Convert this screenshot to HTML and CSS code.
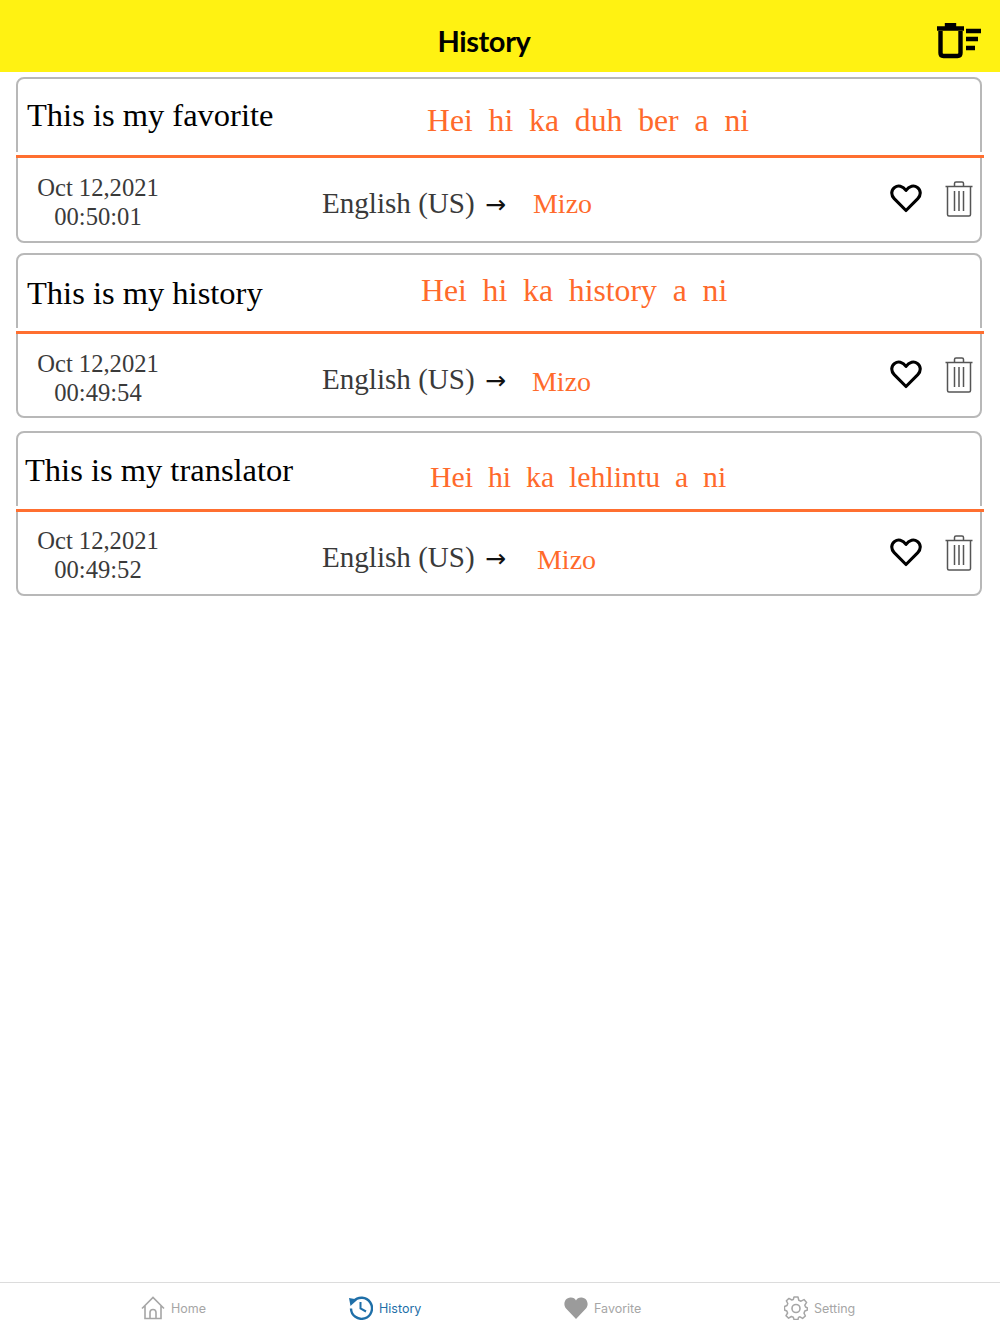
FILE: index.html
```html
<!DOCTYPE html>
<html lang="en">
<head>
<meta charset="utf-8">
<title>History</title>
<link rel="stylesheet" href="styles.css">
</head>
<body>
<svg class="defs" width="0" height="0" aria-hidden="true">
  <symbol id="heart" viewBox="0 0 32 30"><path d="M16 27.500 4.200 15.600C.6 12 1.200 6.800 4.600 4.400 8 2 12.800 2.800 16 7.400 19.200 2.800 24 2 27.400 4.400 30.800 6.800 31.400 12 27.800 15.600Z" fill="none" stroke="#000" stroke-width="3.100" stroke-linejoin="round"/></symbol>
  <symbol id="trash" viewBox="0 0 28 36"><path d="M.5 5.500H27.500M2.500 5.500V33.500Q2.500 35 4 35H24Q25.500 35 25.500 33.500V5.500M9.500 5.500V2.500Q9.500 1 11 1H17Q18.500 1 18.500 2.500V5.500M9.500 10V30M14 10V30M18.500 10V30" fill="none" stroke="#555" stroke-width="1.500"/></symbol>
</svg>
<div class="app">
  <header class="topbar">
    <h1 class="title">History</h1>
    <svg class="clear-all" viewBox="0 0 46 36" aria-hidden="true">
      <path d="M1 5.500H28M11 5V2H18V5M4.500 8V30Q4.500 33 7.500 33H21.500Q24.500 33 24.500 30V8" fill="none" stroke="#000" stroke-width="4.400"/>
      <path d="M30 8H45M30 16H42M30 25H39" fill="none" stroke="#000" stroke-width="4.400"/>
    </svg>
  </header>

  <main class="list">
    <article class="card card-a">
      <div class="pair">
        <p class="source">This is my favorite</p>
        <p class="target">Hei&nbsp; hi&nbsp; ka&nbsp; duh&nbsp; ber&nbsp; a&nbsp; ni</p>
      </div>
      <div class="rule"></div>
      <div class="meta">
        <p class="stamp">Oct 12,2021<br>00:50:01</p>
        <p class="langs">English (US) <span class="arrow">→</span></p>
        <p class="to">Mizo</p>
        <svg class="heart"><use href="#heart"/></svg>
        <svg class="trash"><use href="#trash"/></svg>
      </div>
    </article>

    <article class="card card-b">
      <div class="pair">
        <p class="source">This is my history</p>
        <p class="target">Hei&nbsp; hi&nbsp; ka&nbsp; history&nbsp; a&nbsp; ni</p>
      </div>
      <div class="rule"></div>
      <div class="meta">
        <p class="stamp">Oct 12,2021<br>00:49:54</p>
        <p class="langs">English (US) <span class="arrow">→</span></p>
        <p class="to">Mizo</p>
        <svg class="heart"><use href="#heart"/></svg>
        <svg class="trash"><use href="#trash"/></svg>
      </div>
    </article>

    <article class="card card-c">
      <div class="pair">
        <p class="source">This is my translator</p>
        <p class="target">Hei&nbsp; hi&nbsp; ka&nbsp; lehlintu&nbsp; a&nbsp; ni</p>
      </div>
      <div class="rule"></div>
      <div class="meta">
        <p class="stamp">Oct 12,2021<br>00:49:52</p>
        <p class="langs">English (US) <span class="arrow">→</span></p>
        <p class="to">Mizo</p>
        <svg class="heart"><use href="#heart"/></svg>
        <svg class="trash"><use href="#trash"/></svg>
      </div>
    </article>
  </main>

  <nav class="tabs">
    <a class="tab tab-home">
      <svg class="tab-icon" viewBox="0 0 24 24"><path d="M1 12.500 12 1.500 23 12.500M4 10V22.500H20V10M9 22.500V16.500Q9 13.500 12 13.500 15 13.500 15 16.500V22.500" fill="none" stroke="#a6a6a6" stroke-width="1.600"/></svg>
      <span>Home</span>
    </a>
    <a class="tab tab-history active">
      <svg class="tab-icon" viewBox="0 0 24 24"><path d="M4.500 5.500A10.500 10.500 0 1 1 2 12.500" fill="none" stroke="#1f6fa8" stroke-width="2.400"/><path d="M0 2 8.500 3.500 1.500 10Z" fill="#1f6fa8"/><path d="M11.500 6V12.500L17 15.500" fill="none" stroke="#1f6fa8" stroke-width="2"/></svg>
      <span>History</span>
    </a>
    <a class="tab tab-favorite">
      <svg class="tab-icon" viewBox="0 0 26 24"><path d="M13 24 2.200 12.500C-1.500 8 .8 1 7 .6 9.800.4 12 1.800 13 3.800 14 1.800 16.200.4 19 .6 25.200 1 27.500 8 23.800 12.500Z" fill="#9b9b9b"/></svg>
      <span>Favorite</span>
    </a>
    <a class="tab tab-setting">
      <svg class="tab-icon" viewBox="0 0 24 24"><path d="M10 1H14L14.800 4.200 17 5.200 20 3.600 22.600 6.400 20.800 9.200 21.600 11 23.500 12 23.500 14 20.800 15 20 17.200 21.400 20 18.600 22.400 16 20.800 14.500 21.400 14 23.500H10L9.300 21.200 7.400 20.500 4.600 22.200 2 19.600 3.600 17 2.800 15 .5 14V10.500L3 9.500 3.800 7.500 2.400 4.800 5 2.400 7.800 4 9.300 3.500Z" fill="none" stroke="#a6a6a6" stroke-width="1.500" stroke-linejoin="round"/><circle cx="12" cy="12.500" r="4" fill="none" stroke="#a6a6a6" stroke-width="1.600"/></svg>
      <span>Setting</span>
    </a>
  </nav>
</div>
</body>
</html>
```

FILE: styles.css
```css
* { box-sizing: border-box; }

html, body { margin: 0; height: 100%; }

body {
  background: #fff;
  font-family: "Liberation Serif", serif;
}

p, h1 { margin: 0; font-weight: 400; }

.defs { display: block; height: 0; }

.app {
  height: 1334px;
  display: flex;
  flex-direction: column;
}

.topbar {
  height: 72px;
  flex: none;
  background: #fff212;
  display: flex;
  align-items: center;
  justify-content: center;
  position: relative;
}

.title {
  font-family: Lato, sans-serif;
  font-size: 29px;
  font-weight: 700;
  color: #000;
  margin: 8px 32px 0 0;
  letter-spacing: -0.4px;
}

.clear-all {
  position: absolute;
  right: 18px;
  top: 23px;
  width: 46px;
  height: 36px;
}

.list {
  flex: 1;
  padding: 5px 18px 0 16px;
}

.card {
  height: 165px;
  border: 2px solid #b8b8b8;
  border-radius: 8px;
  display: flex;
  flex-direction: column;
}

.card-a { height: 166px; margin-bottom: 10px; }
.card-b { margin-bottom: 13px; }

.pair {
  height: 76px;
  flex: none;
  display: flex;
  align-items: flex-start;
  position: relative;
}

.source {
  font-size: 32.500px;
  line-height: 38px;
  color: #000;
  white-space: nowrap;
}

.target {
  font-size: 31.700px;
  line-height: 38px;
  color: #ff6a2b;
  white-space: nowrap;
  position: absolute;
}

.card-a .source { padding: 17px 0 0 9px; }
.card-a .target { left: 409px; top: 23px; }

.card-b .source { padding: 19px 0 0 9px; }
.card-b .target { left: 403px; top: 17px; }

.card-c .source { padding: 18px 0 0 7px; }
.card-c .target { left: 412px; top: 25px; font-size: 29.800px; }

.rule {
  height: 3px;
  flex: none;
  background: #ff6f30;
  margin: 0 -4px 0 -2px;
  box-shadow: 0 -3px 0 #fff;
  position: relative;
}

.meta {
  flex: 1;
  position: relative;
  display: flex;
  align-items: flex-start;
}

.stamp {
  width: 160px;
  text-align: center;
  font-size: 24.600px;
  line-height: 29px;
  color: #3a3a3a;
  padding-top: 15px;
}

.card-c .stamp { padding-top: 14px; }

.langs {
  font-size: 29.100px;
  line-height: 36px;
  color: #3a3a3a;
  margin: 27px 0 0 144px;
  white-space: nowrap;
}

.arrow {
  font-family: "DejaVu Sans", sans-serif;
  font-size: 25px;
  color: #111;
  margin-left: 3px;
}

.to {
  font-size: 28px;
  line-height: 36px;
  color: #ff6a2b;
  margin: 28px 0 0 27px;
}

.card-b .to { margin: 30px 0 0 26px; }
.card-c .to { margin: 30px 0 0 31px; }

.heart {
  position: absolute;
  right: 58px;
  top: 25px;
  width: 32px;
  height: 30px;
}

.trash {
  position: absolute;
  right: 7px;
  top: 23px;
  width: 28px;
  height: 36px;
}

.tabs {
  height: 52px;
  flex: none;
  border-top: 1px solid #dcdcdc;
  display: flex;
  align-items: flex-start;
  background: #fff;
}

.tab {
  display: flex;
  align-items: center;
  gap: 6px;
  font-family: Inter, sans-serif;
  font-size: 12.500px;
  color: #a6a6a6;
  position: absolute;
  top: 1296px;
  height: 24px;
}

.tab-home { left: 141px; }
.tab-history { left: 349px; color: #1f6fa8; }
.tab-favorite { left: 564px; }
.tab-setting { left: 784px; }

.tab-icon { width: 24px; height: 24px; flex: none; }
```
